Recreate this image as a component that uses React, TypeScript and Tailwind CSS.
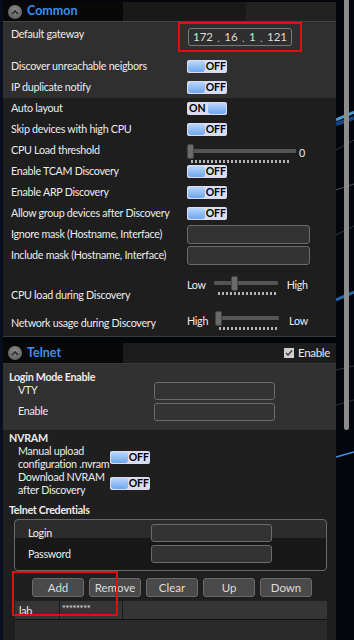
import React from "react";

const font = { fontFamily: 'Lato, "Noto Sans", sans-serif' };

function Toggle({ on = false }: { on?: boolean }) {
  return (
    <div className="flex h-[13px] w-[40px] items-center rounded-[2px] bg-[#dcdcf0] p-[1px] tracking-normal">
      {on ? (
        <>
          <span className="w-[20px] pl-[1px] text-[10.5px] font-bold leading-none text-black">ON</span>
          <span className="h-[11px] w-[18px] rounded-[3px] bg-[linear-gradient(#b9d7fb,#6ea6ee)]" />
        </>
      ) : (
        <>
          <span className="h-[11px] w-[18px] rounded-[3px] bg-[linear-gradient(#b9d7fb,#6ea6ee)]" />
          <span className="pl-[1px] text-[10.5px] font-bold leading-none text-black">OFF</span>
        </>
      )}
    </div>
  );
}

function TextBox({ w = "w-[123px]", h = "h-[19px]" }: { w?: string; h?: string }) {
  return <div className={`${w} ${h} rounded-[3px] border border-[#6b6b6b] bg-[#333]`} />;
}

function Ticks({ w }: { w: string }) {
  return (
    <div
      className={`${w} h-[3px] bg-[repeating-linear-gradient(90deg,#b5b5b5_0_2px,transparent_2px_4px)]`}
    />
  );
}

function Slider({ trackW, thumbLeft, tickW, tickML }: { trackW: string; thumbLeft: string; tickW: string; tickML: string }) {
  return (
    <div className="flex flex-col">
      <div className={`relative h-[15px] ${trackW}`}>
        <div className="absolute left-0 right-0 top-[5px] h-[4px] rounded-[1px] bg-[#555]" />
        <div className={`absolute top-0 ${thumbLeft} h-[15px] w-[7px] rounded-[2px] border border-[#444] bg-[#6a6a6a]`} />
      </div>
      <div className={`${tickML} mt-[1px]`}>
        <Ticks w={tickW} />
      </div>
    </div>
  );
}

function CircleIcon() {
  return (
    <div className="flex h-[14px] w-[14px] items-center justify-center rounded-full bg-[radial-gradient(circle_at_50%_35%,#8a8a8a,#555)]">
      <svg width="8" height="6" viewBox="0 0 8 6">
        <path d="M1 5 L4 2 L7 5" stroke="#2a2a2a" strokeWidth="1.6" fill="none" />
      </svg>
    </div>
  );
}

function Row({ label, children, cls = "" }: { label: string; children?: React.ReactNode; cls?: string }) {
  return (
    <div className={`flex h-[21px] items-center ${cls}`}>
      <div className="w-[184px] whitespace-nowrap pl-[8px]">{label}</div>
      <div className="flex items-center">{children}</div>
    </div>
  );
}

function IpBox() {
  const parts = ["172", "16", "1", "121"];
  return (
    <div className="flex h-[18px] w-[104px] items-center justify-between rounded-[3px] border border-[#7a7a7a] bg-[#2e2e2e] px-[4px] text-[11.5px] tracking-normal text-[#ddd]">
      {parts.map((p, i) => (
        <React.Fragment key={i}>
          <span>{p}</span>
          {i < 3 && <span className="mt-[4px] text-[9px]">.</span>}
        </React.Fragment>
      ))}
    </div>
  );
}

function Background() {
  return (
    <svg className="absolute inset-0 h-full w-full" viewBox="0 0 18 640" preserveAspectRatio="none">
      <rect width="18" height="640" fill="#03060b" />
      <path d="M0 120 L18 112" stroke="#5fb8ff" strokeWidth="3" opacity="0.8" />
      <path d="M0 124 L18 118" stroke="#1e6fd0" strokeWidth="4" opacity="0.6" />
      <path d="M0 190 L18 184" stroke="#9aa" strokeWidth="0.8" opacity="0.6" />
      <path d="M0 150 L18 140" stroke="#9aa" strokeWidth="0.6" opacity="0.5" />
      <path d="M0 300 L18 292" stroke="#3a8de8" strokeWidth="3" opacity="0.7" />
      <path d="M0 235 L18 226" stroke="#8aa" strokeWidth="0.6" opacity="0.5" />
      <path d="M0 405 L18 400" stroke="#9aa" strokeWidth="0.6" opacity="0.5" />
      <path d="M0 457 L18 452" stroke="#49a3ff" strokeWidth="1.4" opacity="0.9" />
      <path d="M0 370 L18 366" stroke="#9aa" strokeWidth="0.6" opacity="0.5" />
    </svg>
  );
}

export default function App() {
  return (
    <div className="flex h-[640px] w-[354px] overflow-hidden bg-[#03060b] text-[10.75px] tracking-[-0.3px] text-[#ececec]" style={font}>
      <div className="w-[3px] bg-[#06101c]" />
      <div className="flex w-[333px] flex-col">
        {/* Common panel */}
        <div className="mt-[2px] flex flex-col border-b border-[#3a3a3a] bg-[#1e1e1e]">
          <div className="flex h-[20px] items-center border-b border-[#444] bg-[linear-gradient(90deg,#080808_0,#080808_36%,#191919_36%,#191919_73%,#222_73%)]">
            <div className="ml-[5px] mr-[5px]"><CircleIcon /></div>
            <span className="font-bold text-[12.5px] tracking-normal text-[#3d8ef2]">Common</span>
          </div>
          <div className="bg-[#2f2f2f]">
            <div className="relative flex h-[34px]">
              <div className="w-[184px] pl-[8px] pt-[4px]">Default gateway</div>
              <div className="ml-[-9px] mt-[0px] flex h-[30px] w-[124px] items-center justify-center border-2 border-[#e01010]">
                <IpBox />
              </div>
            </div>
            <Row label="Discover unreachable neigbors"><Toggle /></Row>
            <Row label="IP duplicate notify"><Toggle /></Row>
          </div>
          <Row label="Auto layout"><Toggle on /></Row>
          <Row label="Skip devices with high CPU"><Toggle /></Row>
          <div className="flex h-[21px] items-center">
            <div className="w-[184px] pl-[8px]">CPU Load threshold</div>
            <div className="mt-[6px] flex items-start">
              <Slider trackW="w-[109px]" thumbLeft="left-0" tickW="w-[100px]" tickML="ml-[4px]" />
              <span className="ml-[3px] mt-[1px]">0</span>
            </div>
          </div>
          <Row label="Enable TCAM Discovery"><Toggle /></Row>
          <Row label="Enable ARP Discovery"><Toggle /></Row>
          <Row label="Allow group devices after Discovery"><Toggle /></Row>
          <Row label="Ignore mask (Hostname, Interface)"><TextBox /></Row>
          <Row label="Include mask (Hostname, Interface)"><TextBox /></Row>
          <div className="flex h-[42px]">
            <div className="w-[184px] whitespace-nowrap pl-[8px] pt-[21px]">CPU load during Discovery</div>
            <div className="flex items-start pt-[10px]">
              <span className="mr-[8px] mt-[1px]">Low</span>
              <Slider trackW="w-[64px]" thumbLeft="left-[17px]" tickW="w-[58px]" tickML="ml-[4px]" />
              <span className="ml-[9px] mt-[1px]">High</span>
            </div>
          </div>
          <div className="flex h-[28px] items-start">
            <div className="w-[184px] whitespace-nowrap pl-[8px] pt-[7px]">Network usage during Discovery</div>
            <div className="flex items-start pt-[3px]">
              <span className="mr-[7px] mt-[2px]">High</span>
              <Slider trackW="w-[64px]" thumbLeft="left-0" tickW="w-[58px]" tickML="ml-[4px]" />
              <span className="ml-[10px] mt-[2px]">Low</span>
            </div>
          </div>
        </div>

        {/* Telnet panel */}
        <div className="mt-[6px] flex flex-1 flex-col bg-[#1f1f1f]">
          <div className="flex h-[21px] items-center border-b border-[#3a3a3a] bg-[linear-gradient(90deg,#080808_0,#080808_36%,#1c1c1c_36%)]">
            <div className="ml-[5px] mr-[5px]"><CircleIcon /></div>
            <span className="font-bold text-[12.5px] tracking-normal text-[#3d8ef2]">Telnet</span>
            <div className="ml-auto mr-[6px] flex items-center">
              <div className="flex h-[10px] w-[10px] items-center justify-center bg-[#cfcfcf]">
                <svg width="8" height="8" viewBox="0 0 8 8"><path d="M1 4 L3 6 L7 1.5" stroke="#333" strokeWidth="1.3" fill="none" /></svg>
              </div>
              <span className="ml-[4px] text-[11.5px]">Enable</span>
            </div>
          </div>
          <div className="bg-[#313131] pb-[8px] pt-[7px]">
            <div className="pl-[6px] font-bold leading-[11px]">Login Mode Enable</div>
            <div className="mt-[-2px] flex h-[21px] items-center">
              <div className="w-[151px] pl-[15px]">VTY</div>
              <TextBox w="w-[121px]" h="h-[18px]" />
            </div>
            <div className="flex h-[21px] items-center">
              <div className="w-[151px] pl-[15px]">Enable</div>
              <TextBox w="w-[121px]" h="h-[18px]" />
            </div>
          </div>
          <div className="pt-[1px]">
            <div className="pl-[6px] font-bold leading-[13px]">NVRAM</div>
            <div className="flex items-center">
              <div className="w-[107px] pl-[15px] leading-[13px]">Manual upload configuration .nvram</div>
              <Toggle />
            </div>
            <div className="flex items-center">
              <div className="w-[107px] pl-[15px] leading-[13px]">Download NVRAM after Discovery</div>
              <Toggle />
            </div>
            <div className="mt-[7px] pl-[6px] font-bold leading-[13px]">Telnet Credentials</div>
            <div className="ml-[11px] mr-[9px] mt-[3px] flex flex-col gap-[3px] rounded-[4px] border border-[#6a6a6a] bg-[linear-gradient(#2c2c2c_0,#2c2c2c_36%,#181818_36%)] px-[13px] pb-[7px] pt-[4px]">
              <div className="flex h-[18px] items-center">
                <div className="w-[123px]">Login</div>
                <TextBox w="w-[121px]" h="h-[18px]" />
              </div>
              <div className="flex h-[18px] items-center">
                <div className="w-[123px]">Password</div>
                <TextBox w="w-[121px]" h="h-[18px]" />
              </div>
            </div>
            <div className="relative mt-[7px] flex gap-[5px] pl-[29px]">
              {["Add", "Remove", "Clear", "Up", "Down"].map((b) => (
                <div
                  key={b}
                  className="flex h-[19px] w-[52px] items-center justify-center rounded-[3px] border border-[#6a6a6a] bg-[#4a4a4a] text-[11.5px] tracking-normal text-[#ddd]"
                >
                  {b}
                </div>
              ))}
              <div className="absolute left-[9px] top-[-7px] h-[45px] w-[106px] border-2 border-[#e01010]" />
            </div>
            <div className="ml-[12px] mr-[9px] mt-[4px] flex h-[19px] border-b border-[#111] bg-[#353535]">
              <div className="w-[45px] border-r border-[#1a1a1a] pl-[4px] leading-[19px]">lab</div>
              <div className="w-[63px] border-r border-[#1a1a1a] pl-[2px] text-[9px] leading-[15px]">********</div>
              <div className="flex-1" />
            </div>
            <div className="ml-[12px] mr-[9px] h-[30px] bg-[#2a2a2a]" />
          </div>
        </div>
      </div>
      <div className="relative flex-1">
        <Background />
        <div className="absolute left-[8px] top-0 h-[430px] w-[5px] rounded-b-[3px] bg-[#8c8c8c]" />
      </div>
    </div>
  );
}
